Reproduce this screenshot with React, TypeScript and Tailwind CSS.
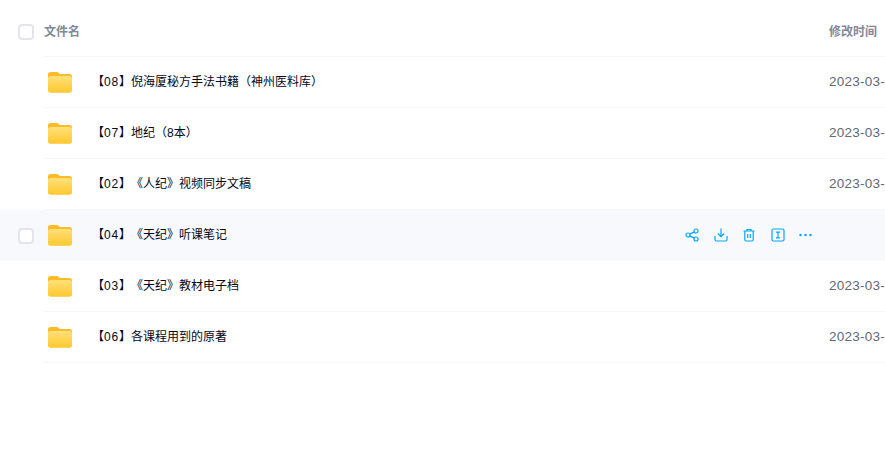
const rows = [
  { code: '08', name: '倪海厦秘方手法书籍（神州医料库）' },
  { code: '07', name: '地纪（8本）' },
  { code: '02', name: '《人纪》视频同步文稿' },
  { code: '04', name: '《天纪》听课笔记', hover: true },
  { code: '03', name: '《天纪》教材电子档' },
  { code: '06', name: '各课程用到的原著' },
];

function FolderIcon() {
  return (
    <svg width="26" height="24" viewBox="0 0 26 24" fill="none" aria-hidden="true" className="shrink-0">
      <path d="M1 4.500C1 3 2 2 3.500 2h6c1 0 1.700.4 2.300 1l1 1H22.500C24 4 25 5 25 6.500V20c0 1.500-1 2.500-2.500 2.500h-19C2 22.500 1 21.500 1 20V4.500Z" fill="#fcbc2a" />
      <path d="M1 8.500C1 7 2 6 3.500 6h19C24 6 25 7 25 8.500V20c0 1.500-1 2.500-2.500 2.500h-19C2 22.500 1 21.500 1 20V8.500Z" fill="url(#folder-front)" />
      <defs>
        <linearGradient id="folder-front" x1="13" y1="6" x2="13" y2="22.500" gradientUnits="userSpaceOnUse">
          <stop stopColor="#ffe07a" />
          <stop offset="1" stopColor="#ffc82e" />
        </linearGradient>
      </defs>
    </svg>
  );
}

function Checkbox() {
  return <div className="h-4 w-4 shrink-0 rounded-[4px] border-2 border-[#e3e4ec] bg-white" />;
}

function RowActions() {
  return (
    <div className="flex items-center gap-[14.500px] text-[#06a7ff]">
      <svg width="14" height="14" viewBox="0 0 14 14" fill="none" stroke="currentColor" strokeWidth="1.200" aria-hidden="true">
        <circle cx="3" cy="7" r="2" />
        <circle cx="11" cy="3" r="2" />
        <circle cx="11" cy="11" r="2" />
        <path d="M4.800 6.100 9.200 3.900M4.800 7.900l4.400 2.200" />
      </svg>
      <svg width="14" height="14" viewBox="0 0 14 14" fill="none" stroke="currentColor" strokeWidth="1.200" aria-hidden="true">
        <path d="M7 .500v8M3.800 5.500 7 8.700l3.200-3.200" />
        <path d="M1 8v3.500A1.500 1.500 0 0 0 2.500 13h9a1.500 1.500 0 0 0 1.500-1.500V8" />
      </svg>
      <svg width="14" height="14" viewBox="0 0 14 14" fill="none" stroke="currentColor" strokeWidth="1.200" aria-hidden="true">
        <path d="M1.500 3h11M5 3V1.500h4V3" />
        <path d="M2.800 3v8.800A1.300 1.300 0 0 0 4.100 13h5.800a1.300 1.300 0 0 0 1.300-1.200V3" />
        <path d="M5.700 6v4M8.300 6v4" />
      </svg>
      <svg width="14" height="14" viewBox="0 0 14 14" fill="none" stroke="currentColor" strokeWidth="1.200" aria-hidden="true">
        <rect x="1" y="1" width="12" height="12" rx="1.500" />
        <path d="M5 4.200h4M5 9.800h4M7 4.200v5.600" />
      </svg>
      <svg width="14" height="14" viewBox="0 0 14 14" fill="currentColor" aria-hidden="true">
        <circle cx="1.500" cy="7" r="1.250" />
        <circle cx="6.500" cy="7" r="1.250" />
        <circle cx="11.500" cy="7" r="1.250" />
      </svg>
    </div>
  );
}

export default function App() {
  return (
    <main className="h-[449px] w-[885px] overflow-hidden bg-white font-['Liberation_Sans','Noto_Sans_CJK_SC',sans-serif] [text-spacing-trim:space-all]">
      {/* Header */}
      <div className="flex h-[57px] items-center pl-[18px] pt-[6px]">
        <Checkbox />
        <div className="ml-[10px] flex h-full flex-1 items-center border-b border-[#f7f7f9] pt-[2px]">
          <span className="flex-1 text-xs font-bold text-[#818999]">文件名</span>
          <span className="w-[56px] text-xs font-bold text-[#818999]">修改时间</span>
        </div>
      </div>

      {/* Rows */}
      {rows.map((row) => (
        <div key={row.code} className={`flex h-[51px] items-center pl-[18px] ${row.hover ? 'bg-[#f7f9fd]' : ''}`}>
          <div className="w-4 shrink-0">{row.hover && <Checkbox />}</div>
          <div className={`ml-[10px] flex h-full min-w-0 flex-1 items-center border-b ${row.hover ? 'border-transparent' : 'border-[#f7f7f9]'}`}>
            <div className="ml-[3px] w-[26px] shrink-0"><FolderIcon /></div>
            <span className="ml-[19px] flex-1 whitespace-nowrap text-xs text-[#03081a]">
              【<span className="tracking-[0.83px]">{row.code}</span>】{row.name}
            </span>
            {row.hover ? (
              <div className="mr-[72px]"><RowActions /></div>
            ) : (
              <span className="w-[56px] shrink-0 whitespace-nowrap text-[13.5px] tracking-[0.25px] text-[#5f6979]">2023-03-</span>
            )}
          </div>
        </div>
      ))}
    </main>
  );
}
